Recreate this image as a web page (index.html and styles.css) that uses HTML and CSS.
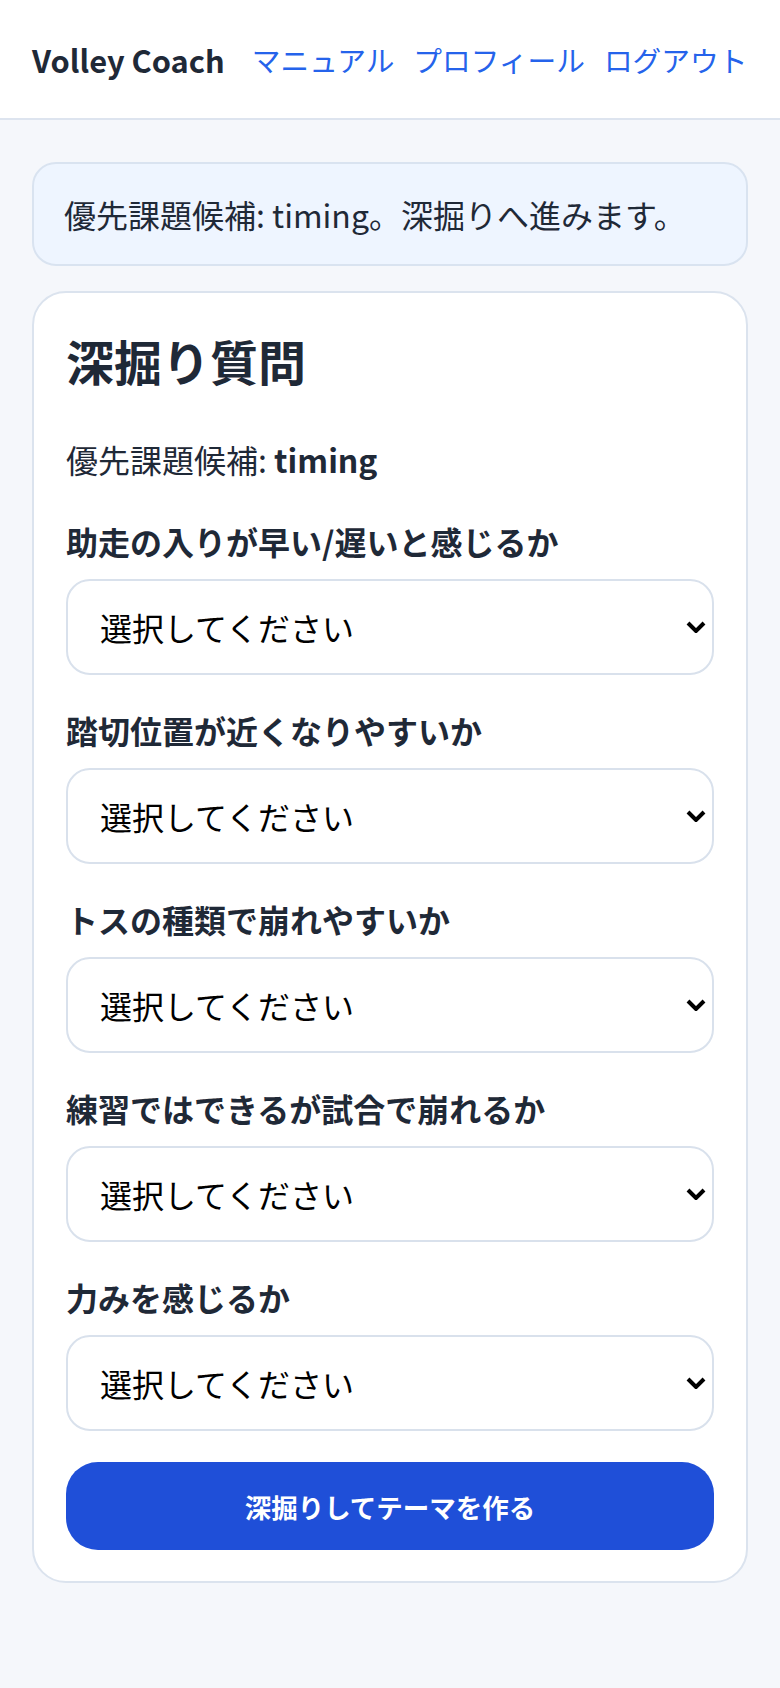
FILE: index.html
```html
<!DOCTYPE html>
<html lang="ja">
<head>
  <meta charset="UTF-8" />
  <title>Volley Coach - 深掘り質問</title>
  <link rel="stylesheet" href="styles.css">
</head>
<body>
  <header class="site-header">
    <span class="brand">Volley Coach</span>
    <nav class="nav">
      <a href="#">マニュアル</a>
      <a href="#">プロフィール</a>
      <a href="#">ログアウト</a>
    </nav>
  </header>

  <main class="main">
    <div class="notice">優先課題候補: timing。深掘りへ進みます。</div>

    <form class="card">
      <h2 class="card-title">深掘り質問</h2>
      <p class="candidate">優先課題候補: <strong>timing</strong></p>

      <!-- 質問一覧 -->
      <div class="field">
        <label class="field-label">助走の入りが早い/遅いと感じるか</label>
        <div class="select-wrap">
          <select><option>選択してください</option><option>早い</option><option>遅い</option></select>
          <svg class="chevron" viewBox="0 0 20 12"><path d="M2 2l8 8 8-8" /></svg>
        </div>
      </div>
      <div class="field">
        <label class="field-label">踏切位置が近くなりやすいか</label>
        <div class="select-wrap">
          <select><option>選択してください</option><option>はい</option><option>いいえ</option></select>
          <svg class="chevron" viewBox="0 0 20 12"><path d="M2 2l8 8 8-8" /></svg>
        </div>
      </div>
      <div class="field">
        <label class="field-label">トスの種類で崩れやすいか</label>
        <div class="select-wrap">
          <select><option>選択してください</option><option>はい</option><option>いいえ</option></select>
          <svg class="chevron" viewBox="0 0 20 12"><path d="M2 2l8 8 8-8" /></svg>
        </div>
      </div>
      <div class="field">
        <label class="field-label">練習ではできるが試合で崩れるか</label>
        <div class="select-wrap">
          <select><option>選択してください</option><option>はい</option><option>いいえ</option></select>
          <svg class="chevron" viewBox="0 0 20 12"><path d="M2 2l8 8 8-8" /></svg>
        </div>
      </div>
      <div class="field">
        <label class="field-label">力みを感じるか</label>
        <div class="select-wrap">
          <select><option>選択してください</option><option>はい</option><option>いいえ</option></select>
          <svg class="chevron" viewBox="0 0 20 12"><path d="M2 2l8 8 8-8" /></svg>
        </div>
      </div>

      <button type="button" class="submit">深掘りしてテーマを作る</button>
    </form>
  </main>
</body>
</html>
```

FILE: styles.css
```css
body {
  margin: 0;
  font-family: "Noto Sans CJK JP", "Noto Sans", sans-serif;
  background: #f5f7fb;
  color: #1f2937;
}
.site-header {
  height: 118px;
  display: flex;
  align-items: center;
  padding: 0 32px;
  background: #fff;
  border-bottom: 2px solid #dde4ef;
}
.brand {
  flex-shrink: 0;
  white-space: nowrap;
  font-size: 30.8px;
  font-weight: 700;
  margin-right: 27px;
}
.nav {
  display: flex;
  gap: 19px;
}
.nav a {
  font-size: 28.7px;
  color: #2563eb;
  text-decoration: none;
  white-space: nowrap;
}
.main {
  padding: 42px 32px 40px;
  display: flex;
  flex-direction: column;
  gap: 25px;
}
.notice {
  background: #eef5ff;
  border: 2px solid #d9e3f0;
  border-radius: 24px;
  padding: 26px 30px;
  font-size: 32px;
  line-height: 48px;
}
.card {
  background: #fff;
  border: 2px solid #dbe3ee;
  border-radius: 34px;
  padding: 32px 32px 31px;
}
.card-title {
  margin: 5px 0 45px;
  font-size: 48px;
  line-height: 60px;
}
.candidate {
  margin: 0 0 34px;
  font-size: 32px;
  line-height: 48px;
}
.field {
  margin-bottom: 31px;
}
.field-label {
  display: block;
  font-size: 32px;
  font-weight: 700;
  line-height: 48px;
  margin-bottom: 14px;
}
.select-wrap {
  position: relative;
}
.select-wrap select {
  appearance: none;
  -webkit-appearance: none;
  width: 100%;
  height: 96px;
  box-sizing: border-box;
  padding: 0 60px 0 32px;
  font-family: inherit;
  font-size: 32px;
  color: #000;
  background: #fff;
  border: 2px solid #d9e1ec;
  border-radius: 24px;
}
.chevron {
  position: absolute;
  right: 8px;
  top: 50%;
  width: 20px;
  height: 12px;
  margin-top: -6px;
  fill: none;
  stroke: #000;
  stroke-width: 4;
  pointer-events: none;
}
.submit {
  display: block;
  width: 100%;
  height: 88px;
  border: none;
  border-radius: 32px;
  background: #1f4fd8;
  color: #fff;
  font-family: inherit;
  font-size: 26.5px;
  font-weight: 700;
}
```
